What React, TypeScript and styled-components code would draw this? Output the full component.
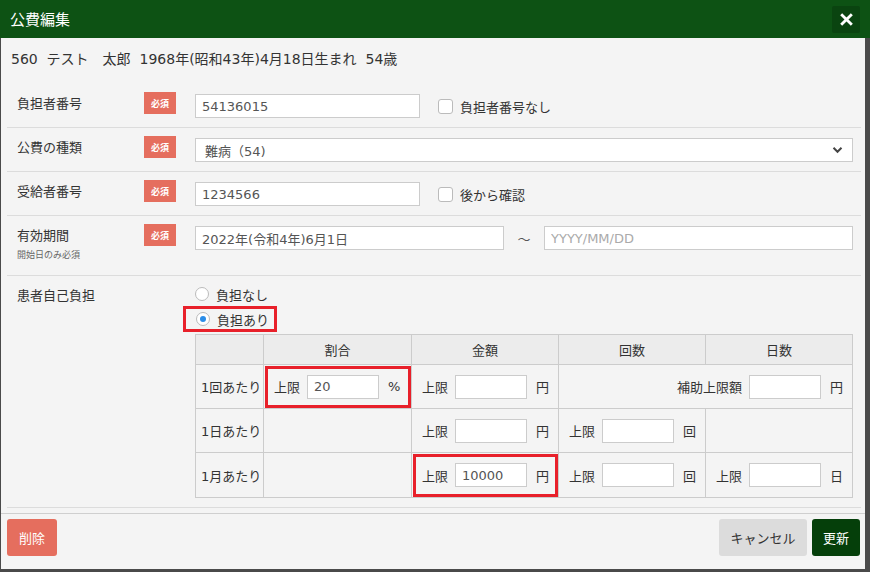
import React from 'react';
import styled, { createGlobalStyle, css } from 'styled-components';

const GlobalStyle = createGlobalStyle`
  html, body {
    margin: 0;
    padding: 0;
    background: #4a4a4a;
  }
  body {
    font-family: 'DejaVu Sans', 'Noto Sans CJK JP', sans-serif;
    color: #333;
  }
  * {
    box-sizing: border-box;
  }
`;

const Modal = styled.div`
  width: 870px;
  height: 572px;
  display: flex;
  flex-direction: column;
`;

const Header = styled.div`
  height: 38px;
  background: #0d5214;
  display: flex;
  align-items: center;
  justify-content: space-between;
  padding: 0 10px 0 10px;
`;

const Title = styled.h1`
  margin: 0;
  font-family: 'Noto Sans CJK JP', sans-serif;
  font-size: 15px;
  font-weight: 400;
  color: #fff;
  line-height: 20px;
`;

const CloseButton = styled.button`
  width: 28px;
  height: 27px;
  border: 0;
  border-radius: 2px;
  background: #0a4410;
  display: flex;
  align-items: center;
  justify-content: center;
  padding: 0;
`;

const Body = styled.div`
  flex: 1;
  background: #f4f4f4;
  border: solid #4a4a4a;
  border-width: 0 5px 3px 1px;
  display: flex;
  flex-direction: column;
`;

const Info = styled.div`
  padding: 10px 10px 14px;
  font-size: 14px;
  line-height: 22px;
  white-space: pre;
`;

const Rows = styled.div`
  margin: 0 4px 5px 6px;
`;

const Row = styled.div`
  display: flex;
  align-items: flex-start;
  padding: 8px 0 9px;
  border-bottom: 1px solid #dcdcdc;
`;

const LabelBox = styled.div`
  width: 137px;
  padding-left: 10px;
  flex-shrink: 0;
`;

const Label = styled.div`
  margin-top: 2px;
  font-size: 13px;
  line-height: 20px;
`;

const SubLabel = styled.div`
  margin: 1px 0 3px;
  font-size: 9px;
  line-height: 16px;
  color: #666;
`;

const Badge = styled.span`
  width: 32px;
  height: 22px;
  margin-right: 19px;
  flex-shrink: 0;
  background: #e56e5e;
  color: #fff;
  font-family: 'Noto Sans CJK JP', sans-serif;
  font-size: 9px;
  font-weight: 700;
  display: flex;
  align-items: center;
  justify-content: center;
`;

const BadgeSpace = styled.span`
  width: 51px;
  flex-shrink: 0;
`;

const Field = styled.div`
  flex: 1;
  display: flex;
  align-items: center;
  margin-top: 2px;
  margin-right: 8px;
`;

const TextInput = styled.input<{ $w?: number }>`
  ${({ $w }) =>
    $w
      ? css`
          width: ${$w}px;
          flex-shrink: 0;
        `
      : css`
          flex: 1;
          min-width: 0;
        `}
  height: 24px;
  border: 1px solid #ccc;
  background: #fff;
  padding: 0 6px;
  font-family: inherit;
  font-size: 13px;
  color: #555;
  outline: none;
  &::placeholder {
    color: #aaa;
  }
`;

const SelectBox = styled.div`
  flex: 1;
  height: 24px;
  border: 1px solid #ccc;
  background: #fff;
  display: flex;
  align-items: center;
  justify-content: space-between;
  padding: 0 9px 0 9px;
  font-size: 13px;
  color: #555;
`;

const CheckLabel = styled.label`
  display: flex;
  align-items: center;
  margin-left: 18px;
  font-size: 13px;
  gap: 7px;
`;

const CheckBox = styled.span`
  width: 15px;
  height: 15px;
  border: 1px solid #bbb;
  border-radius: 3px;
  background: #fff;
`;

const Tilde = styled.span`
  width: 40px;
  flex-shrink: 0;
  text-align: center;
  font-size: 13px;
  color: #555;
`;

const Content = styled.div`
  display: flex;
  flex-direction: column;
  align-items: flex-start;
  margin-right: 8px;
  flex: 1;
`;

const RadioOption = styled.label<{ $marked?: boolean }>`
  display: flex;
  align-items: center;
  gap: 7px;
  height: 20px;
  font-size: 13px;
  ${({ $marked }) =>
    $marked &&
    css`
      height: 26px;
      margin-top: 2px;
      margin-left: -12px;
      padding: 0 5px 0 10px;
      border: 3px solid #e8202a;
    `}
`;

const RadioDot = styled.span<{ $on?: boolean }>`
  width: 14px;
  height: 14px;
  border-radius: 50%;
  border: 1px solid #bbb;
  background: #fff;
  display: flex;
  align-items: center;
  justify-content: center;
  &::after {
    content: '';
    width: 6px;
    height: 6px;
    border-radius: 50%;
    background: ${({ $on }) => ($on ? '#2b8de8' : 'transparent')};
  }
`;

const Table = styled.table`
  margin-top: 2px;
  width: 657px;
  border-collapse: collapse;
  table-layout: fixed;
  font-size: 13px;
`;

const Th = styled.th`
  height: 30px;
  background: #ececec;
  border: 1px solid #ccc;
  font-weight: 400;
  text-align: center;
`;

const Td = styled.td<{ $marked?: boolean; $h?: number }>`
  position: relative;
  height: ${({ $h }) => $h || 44}px;
  border: 1px solid #ccc;
  padding: 0;
  ${({ $marked }) =>
    $marked &&
    css`
      &::after {
        content: '';
        position: absolute;
        inset: 1px 0 0 1px;
        border: 3px solid #e8202a;
      }
    `}
`;

const RowHead = styled.div`
  padding-left: 5px;
  white-space: nowrap;
`;

const Limit = styled.div<{ $end?: boolean }>`
  display: flex;
  align-items: center;
  justify-content: ${({ $end }) => ($end ? 'flex-end' : 'flex-start')};
  padding: 0 9px 0 10px;
  gap: 7px;
  white-space: nowrap;
`;

const Unit = styled.span`
  margin-left: 2px;
`;

const Footer = styled.div`
  border-top: 1px solid #cfcfcf;
  display: flex;
  justify-content: space-between;
  padding: 5px 5px 0 6px;
`;

const Buttons = styled.div`
  display: flex;
  gap: 5px;
`;

const Button = styled.button<{ $kind: 'danger' | 'plain' | 'primary' }>`
  height: 37px;
  border: 0;
  border-radius: 3px;
  padding: 0;
  white-space: nowrap;
  font-family: inherit;
  font-size: 13px;
  ${({ $kind }) =>
    $kind === 'danger'
      ? css`
          background: #e56e5e;
          color: #fff;
          width: 50px;
        `
      : $kind === 'plain'
      ? css`
          background: #dcdcdc;
          color: #333;
          width: 88px;
        `
      : css`
          background: #053f0a;
          color: #fff;
          width: 48px;
        `}
`;

const Required = () => <Badge>必須</Badge>;

const LimitCell: React.FC<{ unit: string; value?: string; label?: string; end?: boolean }> = ({
  unit,
  value,
  label = '上限',
  end,
}) => (
  <Limit $end={end}>
    <span>{label}</span>
    <TextInput $w={72} defaultValue={value} />
    <Unit>{unit}</Unit>
  </Limit>
);

export default function App() {
  return (
    <>
      <GlobalStyle />
      <Modal>
        <Header>
          <Title>公費編集</Title>
          <CloseButton aria-label="close">
            <svg width="13" height="13" viewBox="0 0 12 12">
              <path d="M2 2 L10 10 M10 2 L2 10" stroke="#fff" strokeWidth="2.6" strokeLinecap="square" />
            </svg>
          </CloseButton>
        </Header>
        <Body>
          <Info>{'560  テスト　太郎  1968年(昭和43年)4月18日生まれ  54歳'}</Info>
          <Rows>
            <Row>
              <LabelBox>
                <Label>負担者番号</Label>
              </LabelBox>
              <Required />
              <Field>
                <TextInput $w={225} defaultValue="54136015" />
                <CheckLabel>
                  <CheckBox />
                  負担者番号なし
                </CheckLabel>
              </Field>
            </Row>
            <Row>
              <LabelBox>
                <Label>公費の種類</Label>
              </LabelBox>
              <Required />
              <Field>
                <SelectBox>
                  <span>難病（54)</span>
                  <svg width="11" height="8" viewBox="0 0 11 8">
                    <path d="M1.5 1.8 L5.5 5.8 L9.5 1.8" fill="none" stroke="#444" strokeWidth="2" />
                  </svg>
                </SelectBox>
              </Field>
            </Row>
            <Row>
              <LabelBox>
                <Label>受給者番号</Label>
              </LabelBox>
              <Required />
              <Field>
                <TextInput $w={225} defaultValue="1234566" />
                <CheckLabel>
                  <CheckBox />
                  後から確認
                </CheckLabel>
              </Field>
            </Row>
            <Row>
              <LabelBox>
                <Label>有効期間</Label>
                <SubLabel>開始日のみ必須</SubLabel>
              </LabelBox>
              <Required />
              <Field>
                <TextInput $w={309} defaultValue="2022年(令和4年)6月1日" />
                <Tilde>～</Tilde>
                <TextInput placeholder="YYYY/MM/DD" />
              </Field>
            </Row>
            <Row>
              <LabelBox>
                <Label>患者自己負担</Label>
              </LabelBox>
              <BadgeSpace />
              <Content>
                <RadioOption>
                  <RadioDot />
                  負担なし
                </RadioOption>
                <RadioOption $marked>
                  <RadioDot $on />
                  負担あり
                </RadioOption>
                <Table>
                  <colgroup>
                    <col style={{ width: 68 }} />
                    <col style={{ width: 148 }} />
                    <col style={{ width: 147 }} />
                    <col style={{ width: 147 }} />
                    <col style={{ width: 147 }} />
                  </colgroup>
                  <thead>
                    <tr>
                      <Th />
                      <Th>割合</Th>
                      <Th>金額</Th>
                      <Th>回数</Th>
                      <Th>日数</Th>
                    </tr>
                  </thead>
                  <tbody>
                    <tr>
                      <Td>
                        <RowHead>1回あたり</RowHead>
                      </Td>
                      <Td $marked>
                        <LimitCell unit="%" value="20" />
                      </Td>
                      <Td>
                        <LimitCell unit="円" />
                      </Td>
                      <Td colSpan={2}>
                        <LimitCell unit="円" label="補助上限額" end />
                      </Td>
                    </tr>
                    <tr>
                      <Td>
                        <RowHead>1日あたり</RowHead>
                      </Td>
                      <Td />
                      <Td>
                        <LimitCell unit="円" />
                      </Td>
                      <Td>
                        <LimitCell unit="回" />
                      </Td>
                      <Td />
                    </tr>
                    <tr>
                      <Td $h={45}>
                        <RowHead>1月あたり</RowHead>
                      </Td>
                      <Td $h={45} />
                      <Td $h={45} $marked>
                        <LimitCell unit="円" value="10000" />
                      </Td>
                      <Td $h={45}>
                        <LimitCell unit="回" />
                      </Td>
                      <Td $h={45}>
                        <LimitCell unit="日" />
                      </Td>
                    </tr>
                  </tbody>
                </Table>
              </Content>
            </Row>
          </Rows>
          <Footer>
            <Button $kind="danger">削除</Button>
            <Buttons>
              <Button $kind="plain">キャンセル</Button>
              <Button $kind="primary">更新</Button>
            </Buttons>
          </Footer>
        </Body>
      </Modal>
    </>
  );
}
